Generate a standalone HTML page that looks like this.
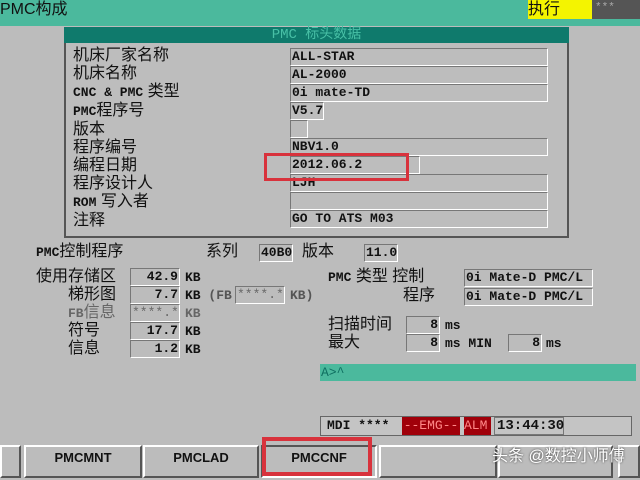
<!DOCTYPE html><html><head><meta charset="utf-8"><style>
*{margin:0;padding:0;box-sizing:border-box}
body{width:640px;height:480px;background:#bcbcbc;position:relative;overflow:hidden;font-family:"Liberation Mono","Noto Sans CJK SC",monospace;color:#111}
.a{position:absolute;white-space:nowrap}
.cn{font-family:"Liberation Sans","Noto Sans CJK SC",sans-serif;font-size:15px;line-height:18px}
.m{font-family:"Liberation Mono","Noto Sans CJK SC",monospace;font-size:13px;font-weight:bold;line-height:16px}
.f{position:absolute;border-top:1px solid #777;border-left:1px solid #777;border-right:1px solid #fff;border-bottom:1px solid #fff;height:18px;font-family:"Liberation Mono",monospace;font-weight:bold;font-size:13px;line-height:16px;padding-left:1px}
.r{text-align:right;padding-right:1px}
.k{position:absolute;top:445px;height:33px;background:#bcbcbc;border-top:2px solid #fff;border-left:2px solid #fff;border-right:2px solid #555;border-bottom:2px solid #555;font-family:"Liberation Sans",sans-serif;font-weight:bold;font-size:13px;text-align:center;line-height:22px}
</style></head><body>
<div class="a" style="left:0;top:0;width:640px;height:26px;background:#4bb99d"></div>
<div class="a cn" style="left:0;top:0;font-size:16px;line-height:20px">PMC构成</div>
<div class="a cn" style="left:528px;top:0;width:64px;height:19px;background:#f4f400;font-size:16px;line-height:19px">执行</div>
<div class="a" style="left:592px;top:0;width:48px;height:19px;background:#555;color:#aaa;font-size:11px;line-height:17px;padding-left:3px">***</div>
<div class="a" style="left:64px;top:27px;width:505px;height:211px;border:2px solid #555;border-top:none;background:#bdbdbd"></div>
<div class="a" style="left:64px;top:27px;width:505px;height:16px;background:#0f7a6c;color:#48c0a6;text-align:center;font-size:14px;line-height:16px;font-family:'Liberation Mono','Noto Sans CJK SC',monospace">PMC 标头数据</div>
<div class="a cn" style="left:73px;top:47px;line-height:18px;font-size:16px">机床厂家名称<br>机床名称<br><b style="font-family:'Liberation Mono';font-size:13px">CNC &amp; PMC</b> 类型<br><b style="font-family:'Liberation Mono';font-size:13px">PMC</b>程序号<br>版本<br>程序编号<br>编程日期<br>程序设计人<br><b style="font-family:'Liberation Mono';font-size:13px">ROM</b> 写入者<br>注释</div>
<div class="f" style="left:290px;top:48px;width:258px">ALL-STAR</div>
<div class="f" style="left:290px;top:66px;width:258px">AL-2000</div>
<div class="f" style="left:290px;top:84px;width:258px">0i mate-TD</div>
<div class="f" style="left:290px;top:102px;width:34px">V5.7</div>
<div class="f" style="left:290px;top:120px;width:18px"></div>
<div class="f" style="left:290px;top:138px;width:258px">NBV1.0</div>
<div class="f" style="left:290px;top:156px;width:130px">2012.06.2</div>
<div class="f" style="left:290px;top:174px;width:258px">LJH</div>
<div class="f" style="left:290px;top:192px;width:258px"></div>
<div class="f" style="left:290px;top:210px;width:258px">GO TO ATS M03</div>
<div class="a" style="left:264px;top:153px;width:145px;height:28px;border:3px solid #d8323c"></div>
<div class="a cn" style="left:36px;top:243px;font-size:16px"><b style="font-family:'Liberation Mono';font-size:13px">PMC</b>控制程序</div>
<div class="a cn" style="left:206px;top:243px;font-size:16px">系列</div>
<div class="f" style="left:259px;top:244px;width:34px">40B0</div>
<div class="a cn" style="left:302px;top:243px;font-size:16px">版本</div>
<div class="f" style="left:364px;top:244px;width:34px">11.0</div>
<div class="a cn" style="left:36px;top:268px;font-size:16px">使用存储区</div>
<div class="a cn" style="left:68px;top:286px;font-size:16px">梯形图</div>
<div class="a cn" style="left:68px;top:304px;color:#666;font-size:16px"><b style="font-family:'Liberation Mono';font-size:13px">FB</b>信息</div>
<div class="a cn" style="left:68px;top:322px;font-size:16px">符号</div>
<div class="a cn" style="left:68px;top:340px;font-size:16px">信息</div>
<div class="f r" style="left:130px;top:268px;width:50px">42.9</div>
<div class="f r" style="left:130px;top:286px;width:50px">7.7</div>
<div class="f r" style="left:130px;top:304px;width:50px;color:#666;font-weight:normal">****.*</div>
<div class="f r" style="left:130px;top:322px;width:50px">17.7</div>
<div class="f r" style="left:130px;top:340px;width:50px">1.2</div>
<div class="a m" style="left:185px;top:270px">KB</div>
<div class="a m" style="left:185px;top:288px">KB <span style="color:#555">(FB</span></div>
<div class="f" style="left:235px;top:286px;width:50px;color:#666;font-weight:normal">****.*</div>
<div class="a m" style="left:290px;top:288px;color:#555">KB)</div>
<div class="a m" style="left:185px;top:306px;color:#666">KB</div>
<div class="a m" style="left:185px;top:324px">KB</div>
<div class="a m" style="left:185px;top:342px">KB</div>
<div class="a cn" style="left:328px;top:268px;font-size:16px"><b style="font-family:'Liberation Mono';font-size:13px">PMC</b> 类型 控制</div>
<div class="a cn" style="left:403px;top:287px;font-size:16px">程序</div>
<div class="f" style="left:464px;top:269px;width:129px">0i Mate-D PMC/L</div>
<div class="f" style="left:464px;top:288px;width:129px">0i Mate-D PMC/L</div>
<div class="a cn" style="left:328px;top:316px;font-size:16px">扫描时间<br>最大</div>
<div class="f r" style="left:406px;top:316px;width:34px">8</div>
<div class="f r" style="left:406px;top:334px;width:34px">8</div>
<div class="a m" style="left:445px;top:318px">ms</div>
<div class="a m" style="left:445px;top:336px">ms MIN</div>
<div class="f r" style="left:508px;top:334px;width:34px">8</div>
<div class="a m" style="left:546px;top:336px">ms</div>
<div class="a" style="left:320px;top:364px;width:316px;height:17px;background:#4bb99d;color:#0e6e60;font-size:13px;line-height:17px;padding-left:1px">A&gt;^</div>
<div class="a" style="left:320px;top:416px;width:312px;height:20px;border:1px solid #666;background:#c4c4c4"></div>
<div class="a m" style="left:327px;top:418px">MDI  ****</div>
<div class="a m" style="left:402px;top:417px;width:58px;height:18px;background:#a0000a;color:#f88;text-align:center;font-weight:normal;line-height:18px">--EMG--</div>
<div class="a m" style="left:464px;top:417px;width:27px;height:18px;background:#a0000a;color:#f88;font-weight:normal;line-height:18px">ALM</div>
<div class="a m" style="left:494px;top:417px;width:70px;height:18px;border:1px solid #777;line-height:16px;padding-left:2px;font-size:14px">13:44:30</div>
<div class="k" style="left:0;width:21px"></div>
<div class="k" style="left:24px;width:118px">PMCMNT</div>
<div class="k" style="left:143px;width:116px">PMCLAD</div>
<div class="k" style="left:261px;width:116px;border-color:#555 #fff #fff #555">PMCCNF</div>
<div class="k" style="left:379px;width:118px"></div>
<div class="k" style="left:498px;width:115px"></div>
<div class="k" style="left:618px;width:22px"></div>
<div class="a" style="left:262px;top:437px;width:110px;height:39px;border:4px solid #d8323c"></div>
<div class="a cn" style="left:492px;top:448px;color:#fff;font-size:16px;text-shadow:0 0 2px #333">头条 @数控小师傅</div>
</body></html>
